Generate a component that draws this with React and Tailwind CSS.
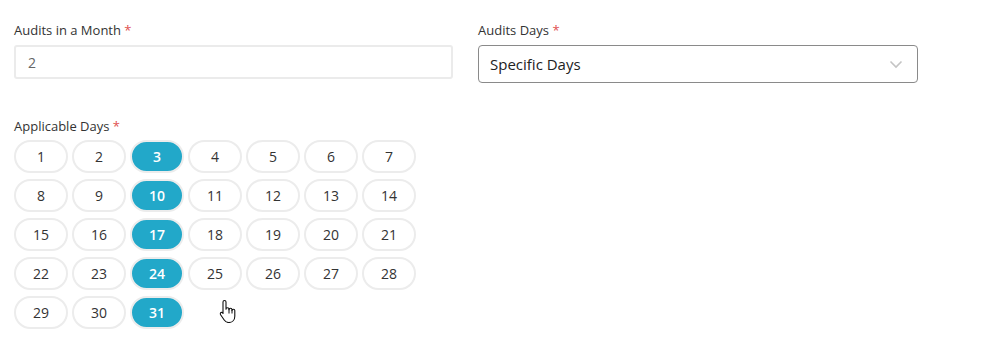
import React, { useState } from 'react';

const DAYS = Array.from({ length: 31 }, (_, i) => i + 1);

function Label({ children }) {
  return (
    <div className="text-[13px] leading-[18px] text-[#333]">
      {children} <span className="text-[#e0504f]">*</span>
    </div>
  );
}

function HandCursor() {
  return (
    <svg width="18" height="24" viewBox="0 0 18 24" className="absolute left-[219px] top-[299px]">
      <path
        d="M5.5 1.5c.9 0 1.5.6 1.5 1.5v7.2c0-.9.6-1.5 1.5-1.5s1.5.6 1.5 1.5v.6c0-.9.6-1.5 1.5-1.5s1.5.6 1.5 1.5v.8c0-.9.6-1.4 1.4-1.4.8 0 1.4.6 1.4 1.4v5.6c0 3.6-2.4 6.3-5.9 6.3H9.6c-2 0-3.3-.9-4.4-2.5L1.6 15.7c-.5-.8-.3-1.7.4-2.1.7-.4 1.5-.2 2 .5L4 14.5V3c0-.9.6-1.5 1.5-1.5z"
        fill="#fff"
        stroke="#111"
        strokeWidth="1.1"
        strokeLinejoin="round"
      />
      <path d="M10 10v4.5M13 10.8v3.7" stroke="#111" strokeWidth="1" />
    </svg>
  );
}

export default function App() {
  const [selected, setSelected] = useState([3, 10, 17, 24, 31]);
  const toggle = (d) =>
    setSelected((prev) => (prev.includes(d) ? prev.filter((x) => x !== d) : [...prev, d]));

  return (
    <div className="relative w-[987px] h-[350px] bg-white pt-[21px] px-[14px]" style={{ fontFamily: '"Open Sans", "Liberation Sans", sans-serif' }}>
      <div className="grid grid-cols-[439px_440px] gap-x-[25px] w-[904px]">
        <div>
          <Label>Audits in a Month</Label>
          <div className="mt-[6px] h-[34px] border-2 border-[#ebebeb] rounded-[3px] flex items-center px-[12px] text-[14px] text-[#666]">
            2
          </div>
        </div>
        <div>
          <Label>Audits Days</Label>
          <div className="mt-[6px] h-[38px] border border-[#8a8a8a] rounded-[4px] flex items-center justify-between pl-[11px] pr-[14px] text-[15px] text-[#222]">
            <span>Specific Days</span>
            <svg width="14" height="9" viewBox="0 0 14 9">
              <path d="M1.5 1.5L7 7l5.5-5.5" fill="none" stroke="#c4c4c4" strokeWidth="1.6" />
            </svg>
          </div>
        </div>
      </div>

      <div className="mt-[34px]">
        <Label>Applicable Days</Label>
        <div className="mt-[5px] grid grid-cols-[repeat(7,54px)] gap-x-[4px] gap-y-[6px]">
          {DAYS.map((d) => {
            const on = selected.includes(d);
            return (
              <button
                key={d}
                onClick={() => toggle(d)}
                className={
                  on
                    ? 'h-[33px] rounded-full border-2 border-[#ececec] bg-[#22a8c9] text-white font-semibold text-[14px] flex items-center justify-center'
                    : 'h-[33px] rounded-full border-2 border-[#ececec] bg-white text-[#333] text-[14px] flex items-center justify-center'
                }
              >
                {d}
              </button>
            );
          })}
        </div>
      </div>

      <HandCursor />
    </div>
  );
}
